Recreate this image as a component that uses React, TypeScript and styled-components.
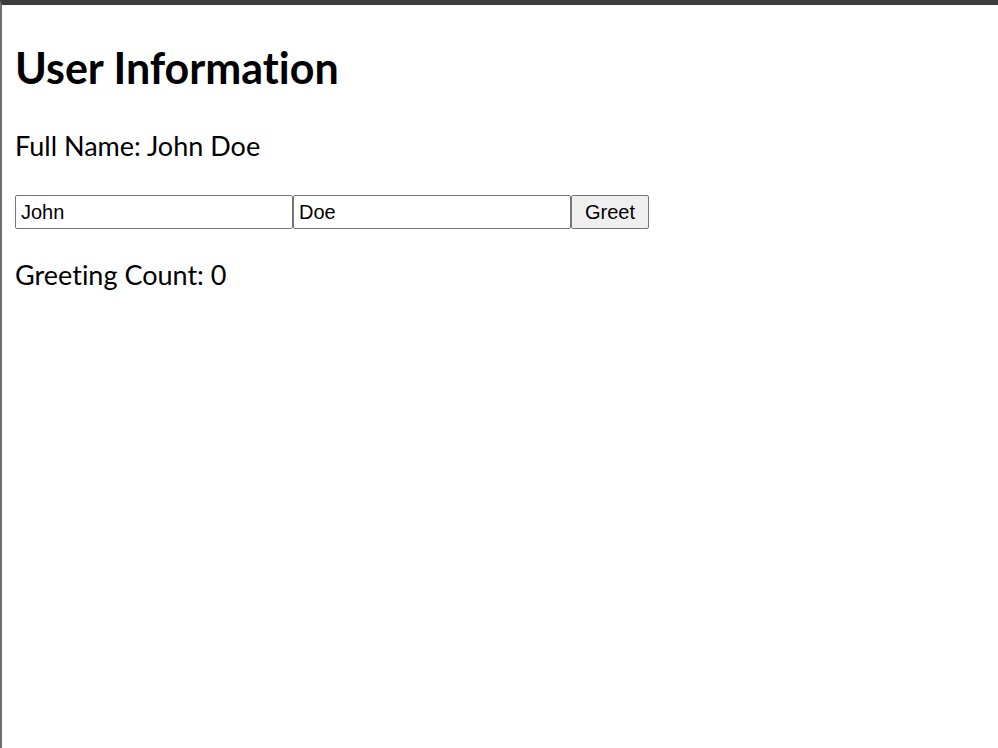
import React, { useState } from "react";
import styled, { createGlobalStyle } from "styled-components";

const Global = createGlobalStyle`
  html, body { margin: 0; padding: 0; background: #fff; }
  body {
    min-height: 100vh;
    box-sizing: border-box;
    border-top: 5px solid #3c3c3c;
    border-left: 2px solid #6f6f6f;
  }
`;

const Page = styled.div`
  padding: 0 13px;
  font-family: Lato, "Noto Sans", sans-serif;
  font-variant-ligatures: none;
  color: #000;
`;

const Title = styled.h1`
  margin: 35px 0 0;
  font-size: 43px;
  font-weight: 700;
  line-height: 56px;
`;

const Line = styled.p<{ $gap: number }>`
  margin: ${(p) => p.$gap}px 0 0;
  font-size: 27px;
  line-height: 34px;
`;

const Row = styled.div`
  display: flex;
  align-items: stretch;
  margin-top: 32px;
  height: 34px;
`;

const Field = styled.input`
  box-sizing: border-box;
  width: 278px;
  height: 34px;
  margin: 0;
  padding: 1px 5px;
  border: 1px solid #767676;
  border-radius: 2px;
  font-family: "Liberation Sans", Arial, sans-serif;
  font-size: 20px;
  color: #000;
  background: #fff;
  outline: none;
`;

const Button = styled.button`
  box-sizing: border-box;
  width: 78px;
  height: 34px;
  margin: 0;
  padding: 1px 6px;
  border: 1px solid #767676;
  border-radius: 2px;
  background: #efefef;
  font-family: "Liberation Sans", Arial, sans-serif;
  font-size: 20px;
  color: #000;
`;

export default function App() {
  const [first, setFirst] = useState("John");
  const [last, setLast] = useState("Doe");
  const [count, setCount] = useState(0);
  return (
    <Page>
      <Global />
      <Title>User Information</Title>
      <Line $gap={33}>Full Name: {first} {last}</Line>
      <Row>
        <Field value={first} onChange={(e) => setFirst(e.target.value)} />
        <Field value={last} onChange={(e) => setLast(e.target.value)} />
        <Button onClick={() => setCount(count + 1)}>Greet</Button>
      </Row>
      <Line $gap={29}>Greeting Count: {count}</Line>
    </Page>
  );
}
